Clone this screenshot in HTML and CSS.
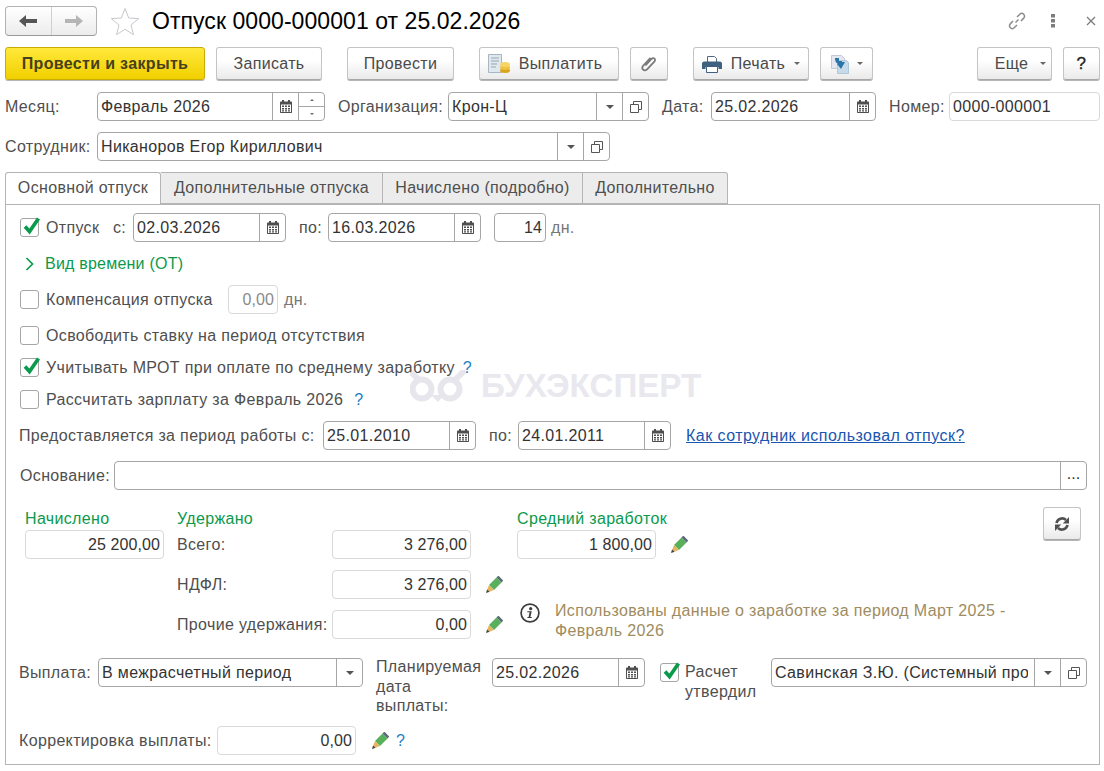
FILE: index.html
```html
<!DOCTYPE html>
<html lang="ru">
<head>
<meta charset="utf-8">
<title>Отпуск 0000-000001 от 25.02.2026</title>
<link rel="stylesheet" href="styles.css">
</head>
<body>
<svg class="defs" width="0" height="0" aria-hidden="true">
  <symbol id="cal" viewBox="0 0 12 13"><path fill="#4f4f4f" d="M2 0h2v1.500h4V0h2v1.500h1.200c.5 0 .8.3.8.8v9.900c0 .5-.3.8-.8.8H.8c-.5 0-.8-.3-.8-.8V2.300c0-.5.300-.8.8-.8H2z"/><path fill="#fff" d="M1 4.500h10V12H1z"/><path fill="#4f4f4f" d="M2 5.500h2v1.500H2zM5 5.500h2v1.500H5zM8 5.500h2v1.500H8zM2 8h2v1.500H2zM5 8h2v1.500H5zM8 8h2v1.500H8zM2 10.300h2v1.200H2zM5 10.300h2v1.200H5zM8 10.300h2v1.200H8z"/></symbol>
  <symbol id="open" viewBox="0 0 12 12"><path fill="none" stroke="#555" d="M3.500 3.500v-3h8v8h-3M.5 3.500h8v8h-8z"/></symbol>
  <symbol id="pencil" viewBox="0 0 18 18"><path fill="#58b05a" d="M4 9 11.500 1.500l5 5L9 14z"/><path fill="#5c6b78" d="M11.500 1.500 12.700.3c.4-.4.900-.4 1.300 0l3.700 3.700c.4.400.4.900 0 1.300l-1.200 1.200z"/><path fill="#e3b565" d="M4 9l5 5-6.500 2.500L1.500 15.500z"/><path fill="#444" d="M2.100 13.500 1 17l3.500-1.200z"/></symbol>
  <symbol id="tick" viewBox="0 0 20 20"><path fill="none" stroke="#0b9a4c" stroke-width="3.700" d="M4 10.500 8.500 15.500 17.500 2.500"/></symbol>
</svg>

<div class="page">
  <header class="titlebar">
    <div class="navgroup">
      <button class="navbtn"><svg width="18" height="12" viewBox="0 0 18 12"><path fill="#555" d="M7 0v4h11v4H7v4L0 6z"/></svg></button>
      <button class="navbtn navbtn-r"><svg width="18" height="12" viewBox="0 0 18 12"><path fill="#b5b5b5" d="M11 0v4H0v4h11v4l7-6z"/></svg></button>
    </div>
    <svg class="star" width="30" height="28" viewBox="0 0 30 28"><path fill="#fff" stroke="#c4c8cc" d="M15 1.500l3.700 9.500 10 .6-7.700 6.400 2.500 9.700-8.500-5.400-8.500 5.400 2.500-9.700-7.700-6.400 10-.6z"/></svg>
    <h1 class="title">Отпуск 0000-000001 от 25.02.2026</h1>
    <div class="winicons">
      <svg width="20" height="20" viewBox="0 0 20 20"><g fill="none" stroke="#8b8b8b" stroke-width="1.500"><path d="M8.500 11.500 11.500 8.500"/><path d="M10 6l2.800-2.800c1.100-1.100 2.800-1.100 3.900 0s1.100 2.800 0 3.900L14 9.900"/><path d="M10 14l-2.800 2.800c-1.100 1.100-2.800 1.100-3.900 0s-1.100-2.800 0-3.900L6 10.100"/></g></svg>
      <svg class="wdots" width="6" height="14" viewBox="0 0 6 14"><path fill="#7d7d7d" d="M1 0h4v3.500H1zM1 5h4v3.500H1zM1 10h4v3.500H1z"/></svg>
      <svg class="wclose" width="10" height="10" viewBox="0 0 10 10"><path stroke="#7d7d7d" stroke-width="1.300" d="M1 1l8 8M9 1l-8 8"/></svg>
    </div>
  </header>

  <div class="toolbar">
    <button class="btn btn-main">Провести и закрыть</button>
    <button class="btn w-106 ml-11">Записать</button>
    <button class="btn w-107 ml-25">Провести</button>
    <button class="btn w-140 ml-25 btn-pay">
      <svg width="24" height="22" viewBox="0 0 24 22"><path fill="#dfe8ee" stroke="#a9b6c2" d="M1.500 1.500h13v18h-13z"/><path stroke="#9aa7b3" d="M4 5h8M4 8h8M4 11h6M4 14h5"/><ellipse cx="18" cy="17.500" rx="5" ry="2.500" fill="#d9a520"/><ellipse cx="18" cy="14.500" rx="5" ry="2.500" fill="#eec23c"/><ellipse cx="18" cy="11.500" rx="5" ry="2.500" fill="#f5d565"/></svg>
      <span>Выплатить</span>
    </button>
    <button class="btn w-38 ml-11">
      <svg width="18" height="18" viewBox="0 0 18 18"><path fill="none" stroke="#7a7a7a" stroke-width="1.800" d="M5.500 10.500l6-6.500c1-1 2.300-1 3-.3s.8 2-.2 3l-7 7.500c-1.400 1.500-3.200 1.500-4.200.5s-1-2.800.4-4.300l7-7.500"/></svg>
    </button>
    <button class="btn w-116 ml-25 btn-print">
      <svg width="20" height="18" viewBox="0 0 20 18"><path fill="#fff" stroke="#4d6a85" d="M5.500 1.500h7l2 2v4h-9z"/><path fill="#3f617f" d="M2 6.500h16c1 0 2 1 2 2V14h-3.500v-2h-13v2H0V8.500c0-1 1-2 2-2z"/><path fill="#fff" stroke="#3f617f" d="M4.500 11.500h11v6h-11z"/></svg>
      <span>Печать</span><i class="caret"></i>
    </button>
    <button class="btn w-53 ml-11 btn-exp">
      <svg width="20" height="20" viewBox="0 0 20 20"><path fill="#e4e7f0" stroke="#c2c8d6" d="M1.500 1.500h10l3 3v10h-13z"/><path fill="#c6dbe9" stroke="#b3c6d4" d="M7.500 6.500h9l2 2v11h-11z"/><path fill="#2a74a8" d="M5 4h4v3h3V4.500l0 0H12v3.500h3l-4 7-4-5h2.500C7 10 5 8 5 4z"/></svg>
      <i class="caret"></i>
    </button>
    <div class="grow"></div>
    <button class="btn w-75 btn-more"><span>Еще</span><i class="caret"></i></button>
    <button class="btn w-37 ml-11 btn-help">?</button>
  </div>

  <div class="row mt-12">
    <span class="lbl w-92">Месяц:</span>
    <div class="field w-228">
      <span class="val">Февраль 2026</span>
      <span class="part"><svg class="ic-cal"><use href="#cal"/></svg></span>
      <span class="part spin"><i class="up"></i><i class="down"></i></span>
    </div>
    <span class="lbl w-123 pl-13">Организация:</span>
    <div class="field w-201">
      <span class="val">Крон-Ц</span>
      <span class="part"><i class="caret dark"></i></span>
      <span class="part"><svg class="ic-open"><use href="#open"/></svg></span>
    </div>
    <span class="lbl w-62 pl-13">Дата:</span>
    <div class="field w-165">
      <span class="val">25.02.2026</span>
      <span class="part"><svg class="ic-cal"><use href="#cal"/></svg></span>
    </div>
    <span class="lbl w-73 pl-13">Номер:</span>
    <div class="field light w-151"><span class="val">0000-000001</span></div>
  </div>

  <div class="row mt-11">
    <span class="lbl w-92">Сотрудник:</span>
    <div class="field w-513">
      <span class="val">Никаноров Егор Кириллович</span>
      <span class="part"><i class="caret dark"></i></span>
      <span class="part"><svg class="ic-open"><use href="#open"/></svg></span>
    </div>
  </div>

  <nav class="tabs">
    <span class="tab active">Основной отпуск</span>
    <span class="tab t2">Дополнительные отпуска</span>
    <span class="tab t3">Начислено (подробно)</span>
    <span class="tab t4">Дополнительно</span>
  </nav>

  <main class="panel">
    <div class="watermark" aria-hidden="true">
      <svg width="56" height="32" viewBox="0 0 56 32"><g fill="none" stroke="#e6e6ec" stroke-width="6"><circle cx="12" cy="19" r="9.500"/><circle cx="40" cy="19" r="9.500"/><path d="M1 2 10 11M55 0 44 11"/></g><path fill="#e6e6ec" d="M21 25h13l-6 7z"/></svg>
      <span>БУХЭКСПЕРТ</span>
    </div>

    <div class="row">
      <span class="check on"><svg width="20" height="20"><use href="#tick"/></svg></span>
      <span class="lbl w-74 pl-7">Отпуск</span>
      <span class="lbl w-20">с:</span>
      <div class="field w-153">
        <span class="val">02.03.2026</span>
        <span class="part"><svg class="ic-cal"><use href="#cal"/></svg></span>
      </div>
      <span class="lbl w-42 pl-13">по:</span>
      <div class="field w-153">
        <span class="val">16.03.2026</span>
        <span class="part"><svg class="ic-cal"><use href="#cal"/></svg></span>
      </div>
      <div class="field w-52 ml-13"><span class="val right">14</span></div>
      <span class="lbl muted pl-5">дн.</span>
    </div>

    <div class="row mt-7">
      <svg class="chev" width="10" height="14" viewBox="0 0 10 14"><path fill="none" stroke="#0b9a4c" stroke-width="1.700" d="M1.500 1l6 6-6 6"/></svg>
      <span class="green">Вид времени (ОТ)</span>
    </div>

    <div class="row mt-7">
      <span class="check"></span>
      <span class="lbl w-189 pl-7">Компенсация отпуска</span>
      <div class="field light w-50"><span class="val right faded">0,00</span></div>
      <span class="lbl muted pl-6">дн.</span>
    </div>

    <div class="row mt-7">
      <span class="check"></span>
      <span class="lbl pl-7">Освободить ставку на период отсутствия</span>
    </div>

    <div class="row mt-3">
      <span class="check on"><svg width="20" height="20"><use href="#tick"/></svg></span>
      <span class="lbl pl-7">Учитывать МРОТ при оплате по среднему заработку</span>
      <span class="hint ml-8">?</span>
    </div>

    <div class="row mt-3">
      <span class="check"></span>
      <span class="lbl pl-7">Рассчитать зарплату за Февраль 2026</span>
      <span class="hint ml-11">?</span>
    </div>

    <div class="row mt-7">
      <span class="lbl out w-304">Предоставляется за период работы с:</span>
      <div class="field w-153">
        <span class="val">25.01.2010</span>
        <span class="part"><svg class="ic-cal"><use href="#cal"/></svg></span>
      </div>
      <span class="lbl w-42 pl-13">по:</span>
      <div class="field w-153">
        <span class="val">24.01.2011</span>
        <span class="part"><svg class="ic-cal"><use href="#cal"/></svg></span>
      </div>
      <a class="link ml-15" href="#">Как сотрудник использовал отпуск?</a>
    </div>

    <div class="row mt-11">
      <span class="lbl w-95">Основание:</span>
      <div class="field w-973">
        <span class="val"></span>
        <span class="part dots">...</span>
      </div>
    </div>

    <section class="totals">
      <span class="green c1 r1">Начислено</span>
      <span class="green c2 r1">Удержано</span>
      <span class="green c5 r1">Средний заработок</span>
      <button class="btn refresh">
        <svg width="16" height="16" viewBox="0 0 16 16"><g fill="none" stroke="#505050" stroke-width="2.600"><path d="M2.500 7A5.700 5.700 0 0 1 12 4"/><path d="M13.500 9A5.700 5.700 0 0 1 4 12"/></g><path fill="#505050" d="M15 1v6.500H8.800zM1 15V8.500h6.200z"/></svg>
      </button>

      <div class="field light c1 r2 w-139 ml-5"><span class="val right">25 200,00</span></div>
      <span class="lbl c2 r2">Всего:</span>
      <div class="field light c3 r2"><span class="val right">3 276,00</span></div>
      <div class="c5 r2 withpencil">
        <div class="field light w-139"><span class="val right">1 800,00</span></div>
        <svg class="pencil ml-14"><use href="#pencil"/></svg>
      </div>

      <span class="lbl c2 r4">НДФЛ:</span>
      <div class="field light c3 r4"><span class="val right">3 276,00</span></div>
      <svg class="pencil c4 r4 ml-14"><use href="#pencil"/></svg>

      <span class="lbl c2 r6">Прочие удержания:</span>
      <div class="field light c3 r6"><span class="val right">0,00</span></div>
      <svg class="pencil c4 r6 ml-14"><use href="#pencil"/></svg>
      <div class="info c5 r6">
        <svg width="20" height="20" viewBox="0 0 20 20"><circle cx="10" cy="10" r="8.900" fill="none" stroke="#3c3c3c" stroke-width="1.700"/><circle cx="10.700" cy="5.700" r="1.600" fill="#3c3c3c"/><path fill="#3c3c3c" d="M7.400 8.200h4.300l-1.300 5.800h1.500l-.3 1.100H7.300l.3-1.100h1l1-4.700H7.200z"/></svg>
        <p>Использованы данные о заработке за период Март 2025 - Февраль 2026</p>
      </div>
    </section>

    <div class="row rowtop mt-19">
      <span class="lbl out w-79 lh29">Выплата:</span>
      <div class="field w-265">
        <span class="val">В межрасчетный период</span>
        <span class="part"><i class="caret dark"></i></span>
      </div>
      <span class="lbl plan">Планируемая дата выплаты:</span>
      <div class="field w-153">
        <span class="val">25.02.2026</span>
        <span class="part"><svg class="ic-cal"><use href="#cal"/></svg></span>
      </div>
      <span class="check on ml-15 mt-5"><svg width="20" height="20"><use href="#tick"/></svg></span>
      <span class="lbl approve">Расчет утвердил</span>
      <div class="field w-316">
        <span class="val clip">Савинская З.Ю. (Системный программист)</span>
        <span class="part"><i class="caret dark"></i></span>
        <span class="part"><svg class="ic-open"><use href="#open"/></svg></span>
      </div>
    </div>

    <div class="row mt-9">
      <span class="lbl out w-198">Корректировка выплаты:</span>
      <div class="field light w-139"><span class="val right">0,00</span></div>
      <svg class="pencil ml-15"><use href="#pencil"/></svg>
      <span class="hint ml-7">?</span>
    </div>
  </main>
</div>
</body>
</html>
```

FILE: styles.css
```css
* { box-sizing: border-box; }
html, body { margin: 0; padding: 0; background: #fff; }
body { font-family: "Liberation Sans", Arial, sans-serif; font-size: 16px; letter-spacing: 0.34px; color: #4a4a4a; overflow: hidden; }
.defs { position: absolute; }
.page { width: 1104px; height: 771px; padding: 6px 4px 0 5px; }

.titlebar { display: flex; align-items: center; height: 30px; }
.navgroup { display: flex; width: 92px; height: 30px; border: 1px solid #b3b3b3; border-bottom-color: #9a9a9a; border-radius: 4px; background: linear-gradient(#fff, #ececec); }
.navbtn { flex: 1; border: 0; padding: 0; background: none; display: flex; align-items: center; justify-content: center; }
.navbtn-r { border-left: 1px solid #cfcfcf; }
.star { margin-left: 13px; }
.title { margin: 0 0 0 12px; font-size: 23px; letter-spacing: 0.06px; font-weight: 400; color: #000; white-space: nowrap; }
.winicons { margin-left: auto; display: flex; align-items: center; margin-right: 4px; }
.wdots { margin-left: 23px; }
.wclose { margin-left: 30px; }

.toolbar { display: flex; height: 33px; margin-top: 11px; }
.grow { flex: 1; }
.btn { height: 33px; border: 1px solid #c4c4c4; border-bottom-color: #a8a8a8; border-radius: 3px; background: linear-gradient(#fff 40%, #eaeaea); font: inherit; letter-spacing: inherit; color: #4a4a4a; padding: 0; display: flex; align-items: center; justify-content: center; box-shadow: 0 1px 0 #b5b5b5; }
.btn-main { width: 200px; background: linear-gradient(#ffe83a, #f1d000); border-color: #c9ac00; font-weight: 700; color: #46411c; }
.btn-pay { padding-right: 9px; }
.btn-pay svg { margin-right: 8px; }
.btn-print svg { margin-right: 9px; }
.btn-exp .caret { margin-left: 7px; }
.btn-more span { margin-right: 3px; margin-left: 12px; }
.btn-help { color: #222; font-size: 17px; font-weight: 400; -webkit-text-stroke: 0.3px #222; }
.caret { display: inline-block; width: 0; height: 0; border: 3px solid transparent; border-top: 3px solid #666; border-bottom: 0; margin-left: 9px; }
.caret.dark { border-width: 4px 4px 0; border-top-color: #555; margin: 0; }

.row { display: flex; align-items: center; height: 29px; }
.rowtop { align-items: flex-start; height: 59px; }
.lbl { white-space: nowrap; color: #4f4f4f; }
.lbl.out { margin-left: -1px; }
.lh29 { line-height: 29px; }
.muted { color: #777; }
.field { height: 29px; display: flex; border: 1px solid #a6a6a6; border-radius: 4px; background: #fff; flex: none; }
.field.light { border-color: #d9d9d9; }
.val { flex: 1; min-width: 0; padding: 0 3px 0 3px; line-height: 27px; color: #333; white-space: nowrap; overflow: hidden; }
.val.right { text-align: right; letter-spacing: 0.1px; }
.val.faded { color: #8a8a8a; }
.part { flex: none; width: 26px; border-left: 1px solid #a6a6a6; display: flex; align-items: center; justify-content: center; }
.ic-cal { width: 12px; height: 13px; }
.ic-open { width: 12px; height: 12px; }
.spin { flex-direction: column; }
.spin .up, .spin .down { flex: 1; width: 100%; display: flex; align-items: center; justify-content: center; }
.spin .up { border-bottom: 1px solid #a6a6a6; }
.spin .up::before { content: ""; border: 2px solid transparent; border-bottom: 2px solid #666; border-top: 0; }
.spin .down::before { content: ""; border: 2px solid transparent; border-top: 2px solid #666; border-bottom: 0; }
.dots { color: #333; font-size: 16px; letter-spacing: 0; padding-bottom: 4px; }

.tabs { display: flex; height: 33px; margin-top: 11px; margin-bottom: -1px; position: relative; }
.tab { height: 32px; line-height: 30px; text-align: center; background: #ececec; border: 1px solid #b4b4b4; border-left: 0; color: #4f4f4f; white-space: nowrap; }
.tab.active { width: 156px; height: 33px; background: #fff; border-left: 1px solid #b4b4b4; border-bottom: 0; border-radius: 3px 3px 0 0; }
.tab.t2 { width: 222px; }
.tab.t3 { width: 200px; }
.tab.t4 { width: 145px; border-radius: 0 3px 0 0; }

.panel { position: relative; width: 1095px; height: 561px; border: 1px solid #b4b4b4; padding: 8px 0 0 14px; }
.watermark { position: absolute; left: 404px; top: 165px; display: flex; align-items: center; gap: 15px; color: #e8e8ee; font-size: 33.200px; letter-spacing: 0; font-weight: 700; line-height: 30px; white-space: nowrap; }
.check { flex: none; width: 19px; height: 19px; border: 1px solid #a6a6a6; border-radius: 3px; background: #fff; position: relative; }
.check svg { position: absolute; left: 0; top: -3px; }
.chev { margin-left: 5px; margin-right: 10px; }
.green { color: #0b9a4c; white-space: nowrap; }
.chev + .green { letter-spacing: 0.22px; }
.hint { color: #1b7fc4; font-size: 16px; }
.link { color: #1a56b0; text-decoration: underline; white-space: nowrap; letter-spacing: 0.46px; }

.totals { display: grid; grid-template-columns: 157px 155px 139px 46px 526px 38px; grid-template-rows: 23px 29px 11px 29px 11px 29px; margin-top: 17px; align-items: center; }
.c1 { grid-column: 1; } .c2 { grid-column: 2; } .c3 { grid-column: 3; } .c4 { grid-column: 4; } .c5 { grid-column: 5; }
.r1 { grid-row: 1; } .r2 { grid-row: 2; } .r4 { grid-row: 4; } .r6 { grid-row: 6; }
.green.c1 { margin-left: 5px; }
.refresh { grid-column: 6; grid-row: 1 / 3; width: 38px; align-self: start; }
.withpencil { display: flex; align-items: center; }
.pencil { width: 18px; height: 18px; flex: none; }
.info { align-self: start; display: flex; align-items: flex-start; margin: -8px 0 0 3px; }
.info svg { flex: none; margin-top: 1px; }
.info p { margin: -1px 0 0 15px; width: 465px; line-height: 20px; color: #a08c60; }

.plan { width: 116px; margin-left: 13px; padding-right: 8px; white-space: normal; line-height: 19.5px; margin-top: -1px; }
.approve { width: 92px; padding-left: 6px; white-space: normal; line-height: 19.5px; margin-top: 4px; }
.val.clip { margin-right: 6px; padding-right: 0; }

.w-20 { width: 20px; } .w-37 { width: 37px; } .w-38 { width: 38px; } .w-42 { width: 42px; }
.w-50 { width: 50px; } .w-52 { width: 52px; } .w-53 { width: 53px; } .w-62 { width: 62px; }
.w-74 { width: 74px; } .w-73 { width: 73px; } .w-75 { width: 75px; } .w-79 { width: 79px; }
.w-92 { width: 92px; } .w-95 { width: 94px; } .w-106 { width: 106px; } .w-107 { width: 107px; }
.w-116 { width: 116px; } .w-123 { width: 123px; } .w-139 { width: 139px; } .w-140 { width: 140px; }
.w-151 { width: 151px; } .w-153 { width: 153px; } .w-165 { width: 165px; } .w-189 { width: 189px; }
.w-198 { width: 198px; } .w-201 { width: 201px; } .w-228 { width: 228px; } .w-265 { width: 265px; }
.w-304 { width: 304px; } .w-316 { width: 316px; } .w-513 { width: 513px; } .w-973 { width: 973px; }
.ml-5 { margin-left: 5px; } .ml-7 { margin-left: 7px; } .ml-8 { margin-left: 8px; } .ml-11 { margin-left: 11px; } .ml-13 { margin-left: 13px; }
.ml-14 { margin-left: 14px; } .ml-15 { margin-left: 15px; } .ml-25 { margin-left: 25px; }
.pl-5 { padding-left: 5px; } .pl-6 { padding-left: 6px; } .pl-7 { padding-left: 7px; } .pl-13 { padding-left: 13px; }
.mt-3 { margin-top: 3px; } .mt-5 { margin-top: 5px; } .mt-7 { margin-top: 7px; } .mt-9 { margin-top: 9px; }
.mt-11 { margin-top: 11px; } .mt-12 { margin-top: 12px; } .mt-19 { margin-top: 19px; }
```
